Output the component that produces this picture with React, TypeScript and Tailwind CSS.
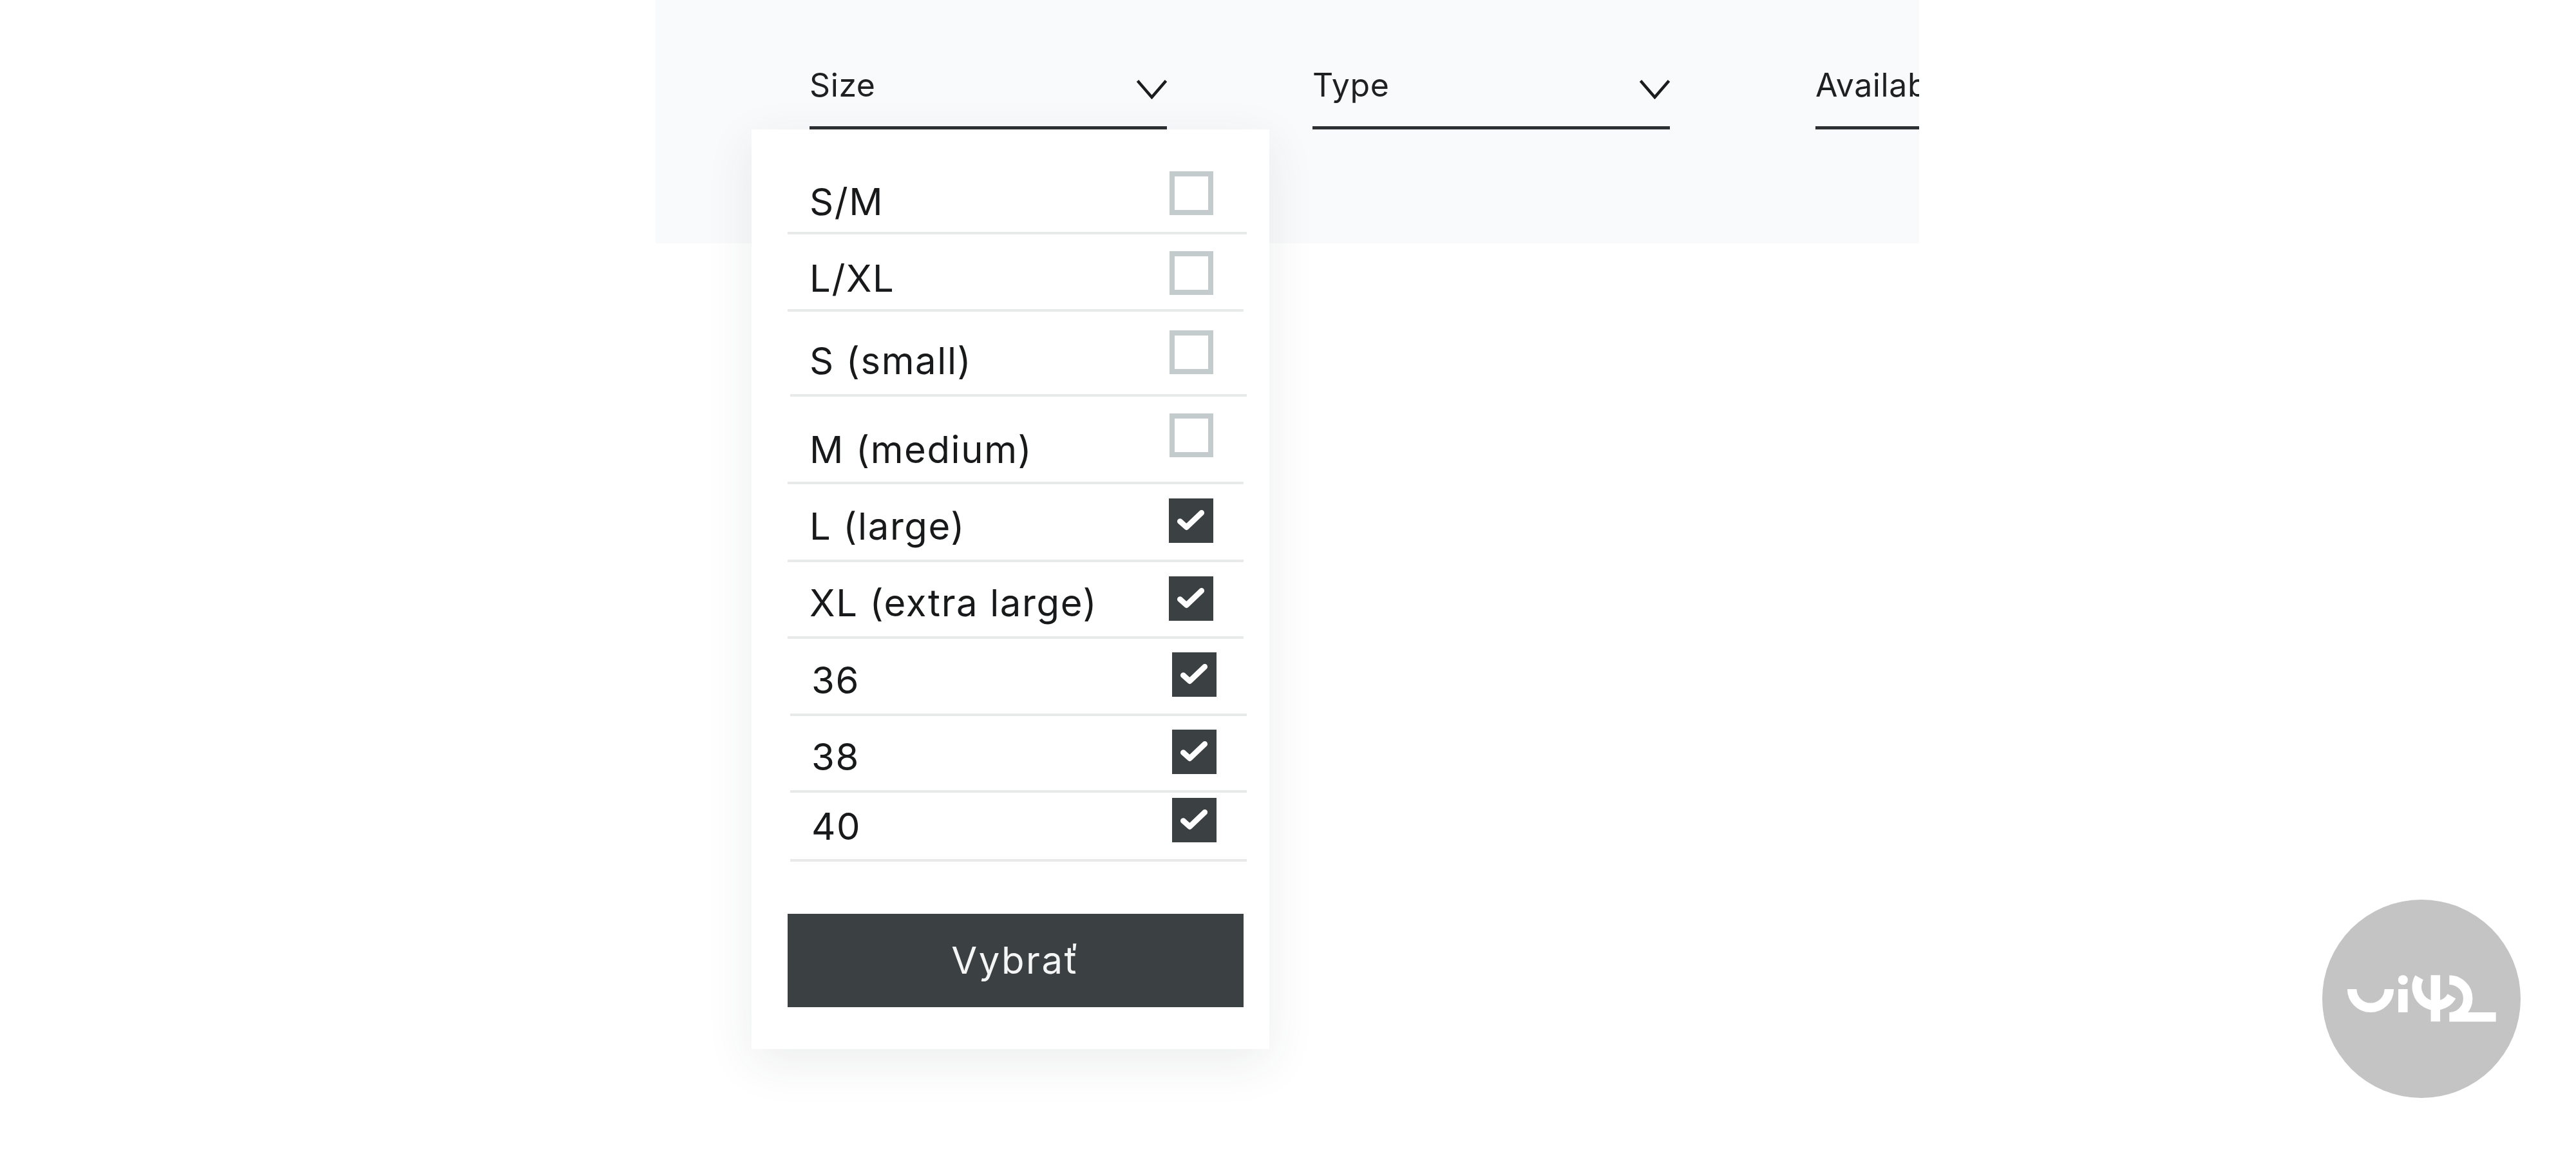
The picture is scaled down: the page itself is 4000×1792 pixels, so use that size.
import { Fragment } from 'react'

type SizeRow = {
  label: string
  checked: boolean
  row: string
  text: string
  box: string
}

const sizeRows: SizeRow[] = [
  { label: 'S/M', checked: false, row: 'ml-[56px] w-[713px] h-[163px]', text: 'mt-[83px] ml-[34px]', box: 'mt-[65px] mr-[52px]' },
  { label: 'L/XL', checked: false, row: 'ml-[56px] w-[708px] h-[120px]', text: 'mt-[39px] ml-[34px]', box: 'mt-[26px] mr-[47px]' },
  { label: 'S (small)', checked: false, row: 'ml-[60px] w-[709px] h-[132px]', text: 'mt-[47px] ml-[30px]', box: 'mt-[29px] mr-[52px]' },
  { label: 'M (medium)', checked: false, row: 'ml-[56px] w-[708px] h-[136px]', text: 'mt-[53px] ml-[34px]', box: 'mt-[26px] mr-[47px]' },
  { label: 'L (large)', checked: true, row: 'ml-[56px] w-[708px] h-[121px]', text: 'mt-[36px] ml-[34px]', box: 'mt-[22px] mr-[47px]' },
  { label: 'XL (extra large)', checked: true, row: 'ml-[56px] w-[708px] h-[119px]', text: 'mt-[34px] ml-[34px]', box: 'mt-[22px] mr-[47px]' },
  { label: '36', checked: true, row: 'ml-[60px] w-[709px] h-[120px]', text: 'mt-[35px] ml-[33px]', box: 'mt-[21px] mr-[47px]' },
  { label: '38', checked: true, row: 'ml-[60px] w-[709px] h-[119px]', text: 'mt-[34px] ml-[33px]', box: 'mt-[21px] mr-[47px]' },
  { label: '40', checked: true, row: 'ml-[60px] w-[709px] h-[107px]', text: 'mt-[23px] ml-[33px]', box: 'mt-[8px] mr-[47px]' },
]

function Chevron() {
  return (
    <svg className="ml-auto mt-[17px] h-[30px] w-[47px] flex-none" viewBox="0 0 47 30" fill="none">
      <path d="M1.5 1.5 L23.5 27 L45.5 1.5" stroke="#1a1d1e" strokeWidth="4.5" />
    </svg>
  )
}

function FilterSelect({ label }: { label: string }) {
  return (
    <div className="box-border flex h-[201px] w-[555px] flex-none items-start border-b-[5px] border-[#2c3032] pt-[107px]">
      <span className="text-[50px] leading-[50px] tracking-[0.6px] text-[#1e2122]">{label}</span>
      <Chevron />
    </div>
  )
}

function Checkbox({ checked, className }: { checked: boolean; className: string }) {
  if (!checked) {
    return <div className={`ml-auto box-border h-[68px] w-[68px] flex-none border-[8px] border-[#c3cbcc] bg-white ${className}`} />
  }
  return (
    <div className={`ml-auto h-[69px] w-[69px] flex-none bg-[#3b4143] ${className}`}>
      <svg className="h-full w-full" viewBox="0 0 68 68" fill="none">
        <path d="M17 35 L27 44 L50 22" stroke="#ffffff" strokeWidth="8.5" strokeLinecap="round" strokeLinejoin="round" />
      </svg>
    </div>
  )
}

function LogoBadge() {
  return (
    <div className="absolute left-[3606px] top-[1397px] h-[308px] w-[308px] rounded-full bg-[#c4c4c4]">
      <svg className="h-full w-full" viewBox="138 83 924 924" fill="none">
        <g stroke="#ffffff" strokeWidth="43.5">
          <path d="M276.5 500 A86.5 86.5 0 0 0 449.5 500" />
          <path d="M514 500 V608" />
          <path d="M665.5 435 V651" />
          <path d="M590 446 A86.5 86.5 0 0 0 741 533" />
          <path d="M730 457 A86.5 86.5 0 0 1 730 630 H947" />
        </g>
        <circle cx="514" cy="457" r="22.5" fill="#ffffff" />
      </svg>
    </div>
  )
}

export default function App() {
  return (
    <div className="relative h-[1792px] w-[4000px] overflow-hidden bg-white font-['Inter',sans-serif]">
      {/* Filter bar */}
      <div className="ml-[1018px] flex h-[378px] w-[1962px] gap-[226px] overflow-hidden bg-[#f9fafb] pl-[239px]">
        <FilterSelect label="Size" />
        <FilterSelect label="Type" />
        <FilterSelect label="Available" />
      </div>

      {/* Size dropdown */}
      <div className="absolute left-[1167px] top-[201px] h-[1428px] w-[804px] bg-white shadow-[0_20px_70px_rgba(40,50,60,0.09)]">
        {sizeRows.map((item) => (
          <Fragment key={item.label}>
            <div className={`box-border flex items-start border-b-4 border-[#e8eaea] ${item.row}`}>
              <span className={`text-[58px] leading-[58px] tracking-[1.6px] text-[#17191a] ${item.text}`}>{item.label}</span>
              <Checkbox checked={item.checked} className={item.box} />
            </div>
          </Fragment>
        ))}
        <button className="ml-[56px] mt-[81px] h-[145px] w-[708px] bg-[#3b4143] text-[58px] tracking-[2.5px] text-[#f4f5f5]">Vybrať</button>
      </div>

      <LogoBadge />
    </div>
  )
}
